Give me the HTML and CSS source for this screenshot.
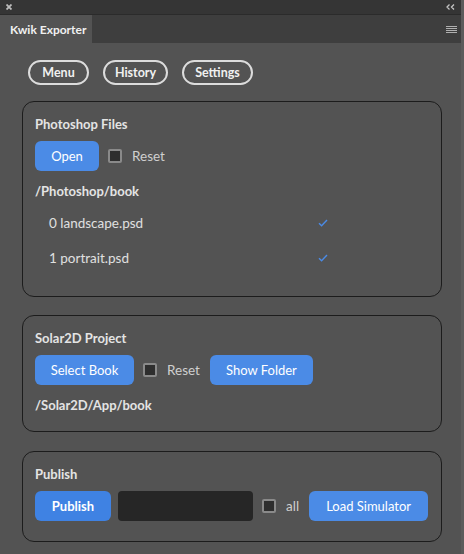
FILE: index.html
```html
<!DOCTYPE html>
<html lang="en">
<head>
    <meta charset="UTF-8">
    <meta name="viewport" content="width=device-width, initial-scale=1.0">
    <title>Kwik Exporter</title>
    <link rel="stylesheet" href="styles.css">
</head>
<body>

    <div class="window">
        <div class="title-strip">
            <svg class="close-icon" width="6" height="6" viewBox="0 0 6 6">
                <path d="M0.5 0.5 L5.5 5.5 M5.5 0.5 L0.5 5.5" stroke="#bdbdbd" stroke-width="1.8"/>
            </svg>
            <svg class="collapse-icon" width="9" height="6" viewBox="0 0 9 6">
                <path d="M3.5 0.5 L1 3 L3.5 5.5 M8 0.5 L5.5 3 L8 5.5" stroke="#c4c4c4" stroke-width="1.3" fill="none"/>
            </svg>
        </div>

        <div class="tab-bar">
            <div class="tab active">Kwik Exporter</div>
            <div class="panel-menu">
                <span></span><span></span><span></span><span></span>
            </div>
        </div>

        <div class="content">
            <div class="nav-buttons">
                <button class="nav-button menu-button">Menu</button>
                <button class="nav-button history-button">History</button>
                <button class="nav-button settings-button">Settings</button>
            </div>

            <div class="section photoshop-section">
                <div class="section-title">Photoshop Files</div>
                <div class="row">
                    <button class="blue-button open-button">Open</button>
                    <label class="check"><span class="box"></span>Reset</label>
                </div>
                <div class="path">/Photoshop/book</div>
                <ul class="file-list">
                    <li>
                        <span class="file-name">0 landscape.psd</span>
                        <svg class="tick" width="10" height="8" viewBox="0 0 10 8"><path d="M1 4.2 L3.6 6.8 L9 1" stroke="#4b8be6" stroke-width="1.4" fill="none"/></svg>
                    </li>
                    <li>
                        <span class="file-name">1 portrait.psd</span>
                        <svg class="tick" width="10" height="8" viewBox="0 0 10 8"><path d="M1 4.2 L3.6 6.8 L9 1" stroke="#4b8be6" stroke-width="1.4" fill="none"/></svg>
                    </li>
                </ul>
            </div>

            <div class="section solar-section">
                <div class="section-title">Solar2D Project</div>
                <div class="row">
                    <button class="blue-button select-button">Select Book</button>
                    <label class="check"><span class="box"></span>Reset</label>
                    <button class="blue-button folder-button">Show Folder</button>
                </div>
                <div class="path">/Solar2D/App/book</div>
            </div>

            <div class="section publish-section">
                <div class="section-title">Publish</div>
                <div class="row">
                    <button class="blue-button publish-button">Publish</button>
                    <input class="publish-input" type="text">
                    <label class="check"><span class="box"></span>all</label>
                    <button class="blue-button simulator-button">Load Simulator</button>
                </div>
            </div>
        </div>
    </div>

</body>
</html>
```

FILE: styles.css
```css
body {
    margin: 0;
    font-family: Lato, 'Open Sans', sans-serif;
    background-color: #535353;
    color: #e4e4e4;
    overflow: hidden;
}

.window {
    width: 461px;
    height: 554px;
    border-right: 3px solid #5b5b5b;
    background-color: #535353;
}

.title-strip {
    height: 14px;
    background-color: #353535;
    border-bottom: 1px solid #2b2b2b;
    display: flex;
    justify-content: space-between;
    align-items: center;
    padding: 0 6px 0 6px;
}

.tab-bar {
    height: 28px;
    background-color: #3e3e3e;
    display: flex;
    justify-content: space-between;
    align-items: stretch;
}

.tab {
    width: 82px;
    padding-left: 10px;
    background-color: #535353;
    font-size: 12px;
    font-weight: bold;
    color: #f0f0f0;
    display: flex;
    align-items: center;
}

.panel-menu {
    display: flex;
    flex-direction: column;
    justify-content: center;
    gap: 1px;
    padding-right: 4px;
}

.panel-menu span {
    display: block;
    width: 11px;
    height: 1px;
    background-color: #b0b0b0;
}

.content {
    padding: 17px 0 0 22px;
}

.nav-buttons {
    display: flex;
    gap: 14px;
    padding-left: 6px;
    margin-bottom: 16px;
}

.nav-button {
    height: 25px;
    padding: 0;
    border: 2px solid #dcdcdc;
    border-radius: 13px;
    background: transparent;
    color: #f0f0f0;
    font-family: inherit;
    font-size: 12.5px;
    font-weight: bold;
    white-space: nowrap;
}

.menu-button {
    width: 61px;
}

.history-button {
    width: 65px;
}

.settings-button {
    width: 71px;
}

.section {
    width: 394px;
    border: 1px solid #1c1c1c;
    border-radius: 12px;
    padding: 14px 12px 18px 12px;
    margin-bottom: 18px;
}

.photoshop-section {
    padding-bottom: 21px;
}

.solar-section {
    margin-bottom: 19px;
}

.publish-section {
    padding-bottom: 20px;
}

.section-title {
    font-size: 13px;
    font-weight: bold;
    line-height: 16px;
    margin-bottom: 9px;
}

.row {
    display: flex;
    align-items: center;
    height: 30px;
}

.blue-button {
    height: 30px;
    border: none;
    border-radius: 6px;
    background-color: #4b8be6;
    color: #ffffff;
    font-family: inherit;
    font-size: 13px;
    padding: 0;
    white-space: nowrap;
}

.open-button {
    width: 64px;
}

.select-button {
    width: 99px;
}

.folder-button {
    width: 103px;
    margin-left: 10px;
}

.publish-button {
    width: 76px;
    background-color: #3f82e3;
    font-weight: bold;
}

.simulator-button {
    width: 119px;
    margin-left: 10px;
}

.publish-input {
    width: 135px;
    height: 30px;
    box-sizing: border-box;
    margin-left: 7px;
    border: none;
    border-radius: 4px;
    background-color: #262626;
}

.check {
    display: flex;
    align-items: center;
    margin-left: 9px;
    font-size: 13.5px;
    color: #cfcfcf;
}

.box {
    width: 10px;
    height: 10px;
    border: 2px solid #8a8a8a;
    border-radius: 2px;
    background-color: #2e2e2e;
    margin-right: 10px;
}

.path {
    margin-top: 12px;
    font-size: 13px;
    font-weight: bold;
    line-height: 16px;
}

.file-list {
    list-style: none;
    margin: 6px 0 0 0;
    padding: 0 0 0 14px;
}

.file-list li {
    display: flex;
    align-items: center;
    height: 35px;
    font-size: 13.5px;
    color: #e0e0e0;
}

.file-name {
    width: 269px;
}

.tick {
    display: block;
}
```
